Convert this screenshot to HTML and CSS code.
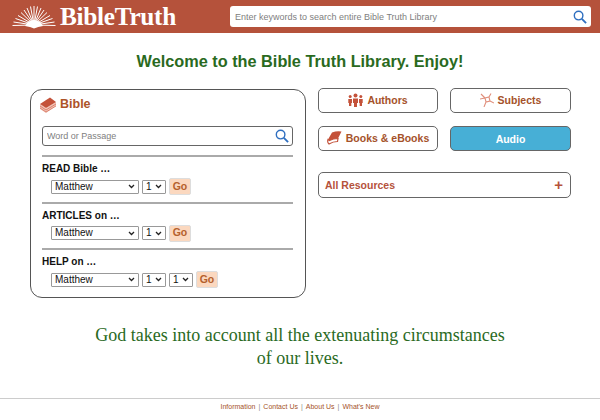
FILE: index.html
```html
<!DOCTYPE html>
<html lang="en">
<head>
    <meta charset="UTF-8">
    <meta name="viewport" content="width=device-width, initial-scale=1.0">
    <title>Bible Truth Library</title>
    <link rel="stylesheet" href="styles.css">
</head>
<body>
    <header class="top-bar">
        <a class="logo" href="#">
            <svg class="logo-sun" width="44" height="24" viewBox="0 0 44 24">
                <g stroke="#fff" stroke-width="1" fill="none">
                    <path d="M22 20 L0.500 20.500 M22 20 L1.500 17 M22 20 L3.500 13.500 M22 20 L6 10.500 M22 20 L9 7.500 M22 20 L12 5 M22 20 L15 3 M22 20 L18.500 1.500 M22 20 L22 1 M22 20 L25.500 1.500 M22 20 L29 3 M22 20 L32 5 M22 20 L35 7.500 M22 20 L38 10.500 M22 20 L40.500 13.500 M22 20 L42.500 17 M22 20 L43.500 20.500"/>
                </g>
                <path d="M13 21 Q16 15 22 15 Q28 15 31 21 Q26 21.500 22 23.500 Q18 21.500 13 21 Z" fill="#fff"/>
            </svg>
            <span class="logo-text">BibleTruth</span>
        </a>
        <div class="site-search">
            <input type="text" placeholder="Enter keywords to search entire Bible Truth Library">
            <svg class="search-icon" width="14" height="14" viewBox="0 0 15 15">
                <circle cx="6" cy="6" r="4.600" fill="none" stroke="#2f6fc0" stroke-width="1.500"/>
                <path d="M9.500 9.500 L14 14" stroke="#2f6fc0" stroke-width="2"/>
            </svg>
        </div>
    </header>

    <h1 class="welcome">Welcome to the Bible Truth Library. Enjoy!</h1>

    <main class="columns">
        <section class="bible-card">
            <h2 class="card-title">
                <svg width="18" height="17" viewBox="0 0 18 17">
                    <path d="M1 8 L7 12 L7 17 L1 13 Z" fill="#f2c4b8"/>
                    <path d="M7 12 L17 6 L17 10 L7 17 Z" fill="#f2c4b8"/>
                    <path d="M1 8 L11 1.500 L17 6 L7 12 Z" fill="#c4523a"/>
                    <path d="M1 10 L7 14 L17 8 M1 12 L7 16 L17 10" stroke="#d2654e" stroke-width="0.700" fill="none"/>
                </svg>
                Bible
            </h2>
            <div class="passage-search">
                <input type="text" placeholder="Word or Passage">
                <svg class="search-icon" width="14" height="14" viewBox="0 0 15 15">
                    <circle cx="6" cy="6" r="4.600" fill="none" stroke="#2f6fc0" stroke-width="1.500"/>
                    <path d="M9.500 9.500 L14 14" stroke="#2f6fc0" stroke-width="2"/>
                </svg>
            </div>

            <div class="picker">
                <div class="picker-label">READ Bible …</div>
                <div class="picker-row">
                    <select class="book"><option>Matthew</option></select>
                    <select class="num"><option>1</option></select>
                    <button class="go">Go</button>
                </div>
            </div>
            <div class="picker">
                <div class="picker-label">ARTICLES on …</div>
                <div class="picker-row">
                    <select class="book"><option>Matthew</option></select>
                    <select class="num"><option>1</option></select>
                    <button class="go">Go</button>
                </div>
            </div>
            <div class="picker">
                <div class="picker-label">HELP on …</div>
                <div class="picker-row">
                    <select class="book"><option>Matthew</option></select>
                    <select class="num"><option>1</option></select>
                    <select class="num"><option>1</option></select>
                    <button class="go">Go</button>
                </div>
            </div>
        </section>

        <section class="side">
            <div class="side-grid">
                <a class="side-btn" href="#">
                    <svg width="15" height="14" viewBox="0 0 15 14" fill="#c4523a">
                        <circle cx="7.500" cy="2.500" r="2"/>
                        <path d="M5 5.500 H10 V10 H9 V14 H6 V10 H5 Z"/>
                        <circle cx="2.200" cy="3.500" r="1.500"/>
                        <path d="M0.300 6 H4 V10 H3.300 V13 H1 V10 H0.300 Z"/>
                        <circle cx="12.800" cy="3.500" r="1.500"/>
                        <path d="M11 6 H14.700 V10 H14 V13 H11.700 V10 H11 Z"/>
                    </svg>
                    Authors
                </a>
                <a class="side-btn" href="#">
                    <svg width="14" height="14" viewBox="0 0 14 14" stroke="#e08f7c" stroke-width="1.100" fill="none">
                        <path d="M5 5 L9 4 L10 8 L6 9 Z M5 5 L1 1 M9 4 L11 0.500 M10 8 L14 10 M6 9 L4 14 M5 5 L0 6"/>
                    </svg>
                    Subjects
                </a>
                <a class="side-btn" href="#">
                    <svg width="15" height="15" viewBox="0 0 15 14">
                        <path d="M1 9 L5 2 Q10 0 14.500 1 L11 8 Q6 8 2.500 10 Z" fill="#c4523a"/>
                        <path d="M1 9 Q0 12 2 13.500 Q6 11 10.500 11 L11 8 Q6 8 2.500 10 Z" fill="none" stroke="#c4523a" stroke-width="1.200"/>
                    </svg>
                    Books &amp; eBooks
                </a>
                <a class="side-btn audio" href="#">Audio</a>
            </div>
            <a class="all-resources" href="#">
                All Resources
                <span class="plus">+</span>
            </a>
        </section>
    </main>

    <p class="quote">God takes into account all the extenuating circumstances<br>of our lives.</p>

    <footer class="footer">
        <a href="#">Information</a><span>|</span><a href="#">Contact Us</a><span>|</span><a href="#">About Us</a><span>|</span><a href="#">What's New</a>
    </footer>
</body>
</html>
```

FILE: styles.css
```css
/* General Styles */
body {
    font-family: 'Liberation Sans', Arial, sans-serif;
    background: white;
    margin: 0;
    padding: 0;
    height: 420px;
    overflow: hidden;
}

a {
    text-decoration: none;
}

/* Header */
.top-bar {
    background: #b5523b;
    height: 33px;
    display: flex;
    align-items: center;
    justify-content: space-between;
    padding: 0 9px 0 12px;
}

.logo {
    display: flex;
    align-items: center;
    gap: 4px;
}

.logo-text {
    font-family: 'Liberation Serif', serif;
    font-size: 25.300px;
    font-weight: bold;
    color: white;
    letter-spacing: -0.300px;
}

.site-search {
    width: 361px;
    height: 21px;
    background: white;
    border-radius: 3px;
    display: flex;
    align-items: center;
    padding: 0 4px 0 5px;
    box-sizing: border-box;
}

.site-search input,
.passage-search input {
    flex: 1;
    border: none;
    outline: none;
    padding: 0;
    background: transparent;
    font-family: inherit;
    font-size: 9px;
}

.site-search input::placeholder,
.passage-search input::placeholder {
    color: #808080;
    opacity: 1;
}

/* Heading */
.welcome {
    margin: 18px 0 18px;
    text-align: center;
    font-size: 16.300px;
    line-height: 20px;
    color: #2a6a1e;
}

/* Columns */
.columns {
    display: flex;
    align-items: flex-start;
    gap: 12px;
    padding: 0 29px 0 30px;
}

.bible-card {
    width: 276px;
    height: 209px;
    box-sizing: border-box;
    border: 1px solid #555;
    border-radius: 12px;
    padding: 6px 12px 0 11px;
}

.card-title {
    margin: 0 0 13px -3px;
    display: flex;
    align-items: center;
    gap: 3px;
    font-size: 12.500px;
    line-height: 17px;
    color: #ad5328;
    height: 17px;
}

.passage-search {
    height: 20px;
    box-sizing: border-box;
    border: 1px solid #666;
    border-radius: 3px;
    display: flex;
    align-items: center;
    padding: 0 3px 0 4px;
}

.picker {
    border-top: 2px solid #aaa;
    margin-top: 9px;
    padding-top: 6px;
}

.picker + .picker {
    margin-top: 6.600px;
}

.picker-label {
    font-size: 10px;
    line-height: 12px;
    font-weight: bold;
    color: #111;
}

.picker-row {
    display: flex;
    align-items: center;
    gap: 3px;
    padding-left: 9px;
    margin-top: 3px;
}

select {
    appearance: none;
    font-family: inherit;
    font-size: 10px;
    line-height: 12px;
    height: 14px;
    box-sizing: border-box;
    padding: 0 0 0 3px;
    color: #111;
    border: 1px solid #999;
    border-radius: 1px;
    background: white url("data:image/svg+xml,%3Csvg xmlns='http://www.w3.org/2000/svg' width='7' height='5'%3E%3Cpath d='M1 1 L3.500 3.500 L6 1' fill='none' stroke='%23222' stroke-width='1.300'/%3E%3C/svg%3E") no-repeat right 3px center;
}

.book {
    width: 88px;
}

.num {
    width: 24px;
}

.go {
    width: 22px;
    height: 17px;
    padding: 0 0 2px;
    background: #fbd8bf;
    color: #b5602c;
    border: 1px solid #ddd;
    border-radius: 2px;
    font-family: inherit;
    font-size: 10.500px;
    font-weight: bold;
}

/* Right side */
.side {
    width: 253px;
}

.side-grid {
    display: grid;
    grid-template-columns: 120px 121px;
    grid-template-rows: 25px 25px;
    column-gap: 12px;
    row-gap: 13px;
    margin-top: -1px;
}

.side-btn {
    display: flex;
    align-items: center;
    justify-content: center;
    gap: 4px;
    box-sizing: border-box;
    border: 1px solid #666;
    border-radius: 5px;
    padding-bottom: 2px;
    font-size: 10.500px;
    font-weight: bold;
    color: #a5522a;
    background: white;
}

.audio {
    background: #47afd6;
    color: white;
    padding-bottom: 0;
}

.all-resources {
    margin-top: 21px;
    height: 26px;
    box-sizing: border-box;
    border: 1px solid #666;
    border-radius: 5px;
    display: flex;
    align-items: center;
    justify-content: space-between;
    padding: 0 7px 0 6px;
    font-size: 10.500px;
    font-weight: bold;
    color: #b5523b;
}

.plus {
    font-size: 15px;
    padding-bottom: 2px;
}

/* Quote */
.quote {
    margin: 26px 0 0;
    text-align: center;
    font-family: 'Liberation Serif', serif;
    font-size: 18px;
    line-height: 23px;
    color: #2a6a1e;
}

/* Footer */
.footer {
    margin-top: 28px;
    border-top: 1px solid #ccc;
    padding-top: 2px;
    display: flex;
    justify-content: center;
    gap: 3px;
    font-size: 7px;
    line-height: 12px;
    color: #888;
}

.footer a {
    color: #a5522a;
}
```
